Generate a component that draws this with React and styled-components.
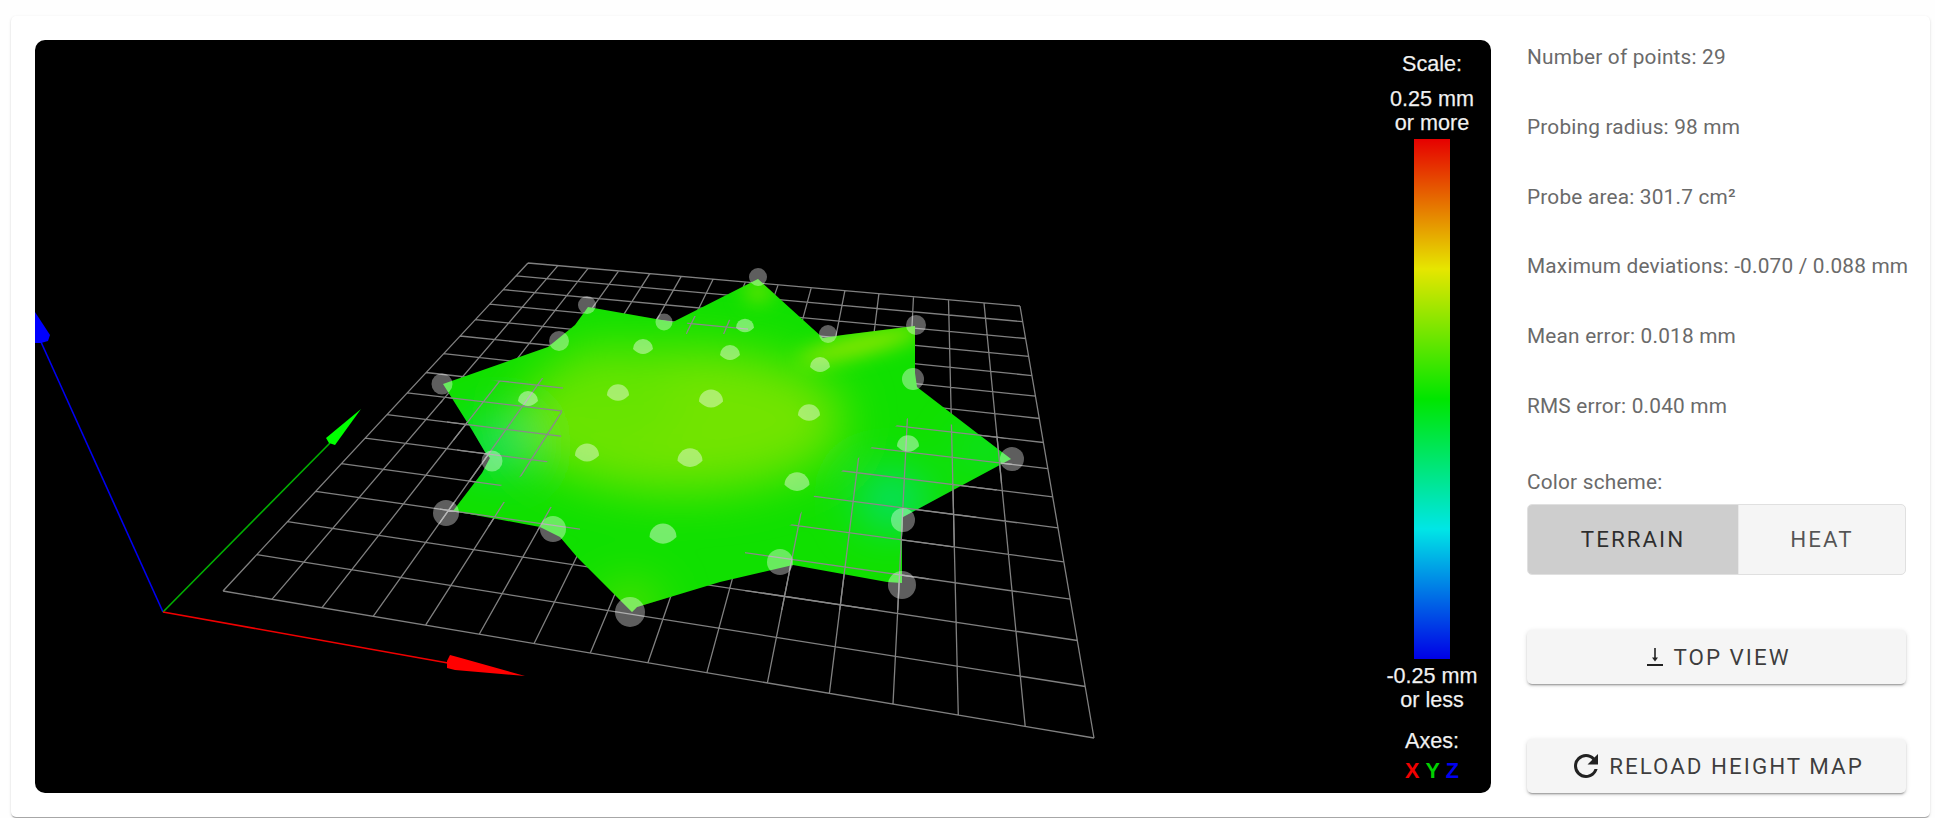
import React from "react";
import styled, { createGlobalStyle } from "styled-components";

const Global = createGlobalStyle`
  html, body { margin: 0; padding: 0; background: #fefefe; }
  body { font-family: Roboto, "Liberation Sans", sans-serif; overflow: hidden; }
`;

const Page = styled.div`
  padding: 16px 5px 1px 11px;
`;
const Card = styled.section`
  display: flex;
  gap: 36px;
  padding: 24px;
  background: #fff;
  border-radius: 5px;
  box-shadow: 0 2px 1px -1px rgba(0,0,0,.2), 0 1px 1px 0 rgba(0,0,0,.14), 0 1px 3px 0 rgba(0,0,0,.12);
`;
const Viewport = styled.div`
  position: relative;
  flex: 1;
  height: 753px;
  background: #000;
  border-radius: 10px;
  overflow: hidden;
`;
const Scene = styled.svg`
  display: block;
  width: 100%;
  height: 100%;
`;
const Legend = styled.div`
  position: absolute;
  top: 12px;
  right: 9px;
  bottom: 10px;
  width: 100px;
  display: flex;
  flex-direction: column;
  align-items: center;
  color: #f4f4f4;
  font-family: "Liberation Sans", Arial, sans-serif;
  font-size: 21.6px;
  line-height: 24px;
  text-align: center;
  -webkit-text-stroke: 0.25px #ddd;
`;
const LegendLabel = styled.div`
  margin-top: ${p => p.$top || 0}px;
  white-space: nowrap;
`;
const ScaleBar = styled.div`
  flex: 1;
  width: 36px;
  margin: 4px 0 5px;
  background: linear-gradient(to bottom, #e60000 0%, #e6e600 25%, #00e600 50%, #00e6e6 75%, #0000e6 100%);
`;
const AxisLetters = styled.div`
  display: flex;
  gap: 6px;
  margin-top: 6px;
  font-weight: 700;
  -webkit-text-stroke: 0;
`;
const AxisLetter = styled.span`
  color: ${p => p.$color};
`;
const Side = styled.aside`
  width: 379px;
  display: flex;
  flex-direction: column;
  color: #6a6a6a;
  font-size: 20.8px;
  letter-spacing: 0.2px;
`;
const InfoList = styled.div`
  display: grid;
  gap: 35.8px;
`;
const InfoRow = styled.div`
  height: 34px;
  line-height: 34px;
  white-space: nowrap;
`;
const SchemeLabel = styled(InfoRow)`
  margin-top: 42px;
`;
const Toggle = styled.div`
  display: grid;
  grid-template-columns: 211px 1fr;
  height: 71px;
  margin-top: 5px;
  box-sizing: border-box;
  border: 1px solid #e0e0e0;
  border-radius: 5px;
  background: #f5f5f5;
  overflow: hidden;
`;
const ToggleItem = styled.div`
  display: flex;
  align-items: center;
  justify-content: center;
  font-size: 22.4px;
  letter-spacing: 2px;
  color: ${p => (p.$active ? "rgba(0,0,0,.78)" : "rgba(0,0,0,.66)")};
  background: ${p => (p.$active ? "#cecece" : "transparent")};
  border-right: ${p => (p.$active ? "1px solid #e8e8e8" : "none")};
`;
const Action = styled.button`
  display: flex;
  align-items: center;
  justify-content: center;
  gap: 10px;
  height: 54px;
  margin-top: 55px;
  padding: 0 0 0 5px;
  border: 0;
  border-radius: 5px;
  background: #f5f5f5;
  color: rgba(0,0,0,.76);
  font: inherit;
  font-size: 22.4px;
  letter-spacing: 2px;
  box-shadow: 0 3px 1px -2px rgba(0,0,0,.2), 0 2px 2px 0 rgba(0,0,0,.14), 0 1px 5px 0 rgba(0,0,0,.12);
`;
const ReloadIcon = styled.svg`
  width: 36px;
  height: 36px;
  margin: 0 -5px 0 -6px;
  fill: #222;
`;
const TopIcon = styled.svg`
  width: 16px;
  height: 18px;
  fill: #222;
`;

// projective map of the unit square on to the four grid corners
const corners = [[223, 591], [1094, 738], [1020, 306], [528, 263]];
function homography([[x0, y0], [x1, y1], [x2, y2], [x3, y3]]) {
  const dx1 = x1 - x2, dx2 = x3 - x2, sx = x0 - x1 + x2 - x3;
  const dy1 = y1 - y2, dy2 = y3 - y2, sy = y0 - y1 + y2 - y3;
  const det = dx1 * dy2 - dx2 * dy1;
  const g = (sx * dy2 - dx2 * sy) / det;
  const h = (dx1 * sy - sx * dy1) / det;
  const a = x1 - x0 + g * x1, b = x3 - x0 + h * x3;
  const d = y1 - y0 + g * y1, e = y3 - y0 + h * y3;
  return (u, v) => {
    const w = g * u + h * v + 1;
    return [(a * u + b * v + x0) / w, (d * u + e * v + y0) / w];
  };
}
const project = homography(corners);
const gridPath = (() => {
  const n = 15;
  let s = "";
  for (let i = 0; i <= n; i++) {
    const t = i / n;
    const [a, b] = project(t, 0), [c, d] = project(t, 1);
    const [e, f] = project(0, t), [g, h] = project(1, t);
    s += `M${a.toFixed(1)} ${b.toFixed(1)}L${c.toFixed(1)} ${d.toFixed(1)}`;
    s += `M${e.toFixed(1)} ${f.toFixed(1)}L${g.toFixed(1)} ${h.toFixed(1)}`;
  }
  return s;
})();

const meshPoints =
  "443,384 548,347 575,325 588,307 673,322 758,279 823,338 843,335 915,326 915,373 917,387 973,430 1011,459 903,517 902,537 902,583 887,582 793,565 720,582 637,607 632,612 617,597 577,557 560,537 540,527 453,511 482,473 490,458 485,452 472,430";

const overGrid = [
  "440,402 490,381 545,378 563,385 561,440 547,462 522,476 500,486 470,486",
  "440,500 505,502 552,507 580,525 580,533 440,523",
  "688,316 697,316 748,322 748,334 686,334",
  "745,551 792,524 815,495 843,470 872,447 897,425 908,418 955,425 1012,440 1012,470 905,610 745,610",
];

const rimPoints = [
  [442, 384, 10.5], [587, 305, 9], [559, 341, 10], [664, 322, 8.5], [758, 277, 9], [828, 334, 9],
  [916, 325, 10], [913, 379, 11], [1012, 459, 12], [903, 520, 12], [902, 585, 14], [780, 562, 13],
  [630, 612, 15], [553, 529, 13], [446, 513, 13], [492, 461, 10.5],
];
const innerPoints = [
  [643, 346, 10], [730, 352, 10], [618, 392, 11], [711, 398, 12], [528, 398, 10], [745, 325, 9],
  [820, 364, 10], [809, 412, 11], [908, 443, 11], [587, 452, 12], [690, 457, 12.5], [663, 533, 13.5],
  [797, 481, 12.5],
];
const dome = ([x, y, r]) =>
  `M${x - r} ${y + r * 0.3}A${r} ${r} 0 1 1 ${x + r} ${y + r * 0.3}Q${x} ${y + r * 1.3} ${x - r} ${y + r * 0.3}Z`;

const softBlobs = [
  { cx: 680, cy: 420, rx: 165, ry: 72, fill: "#72e400" },
  { cx: 610, cy: 395, rx: 70, ry: 50, fill: "#66e400" },
  { cx: 630, cy: 605, rx: 30, ry: 18, fill: "#6ce000" },
  { cx: 497, cy: 445, rx: 30, ry: 22, fill: "#00e080" },
  { cx: 892, cy: 500, rx: 32, ry: 24, fill: "#00e090" },
  { cx: 985, cy: 450, rx: 24, ry: 10, fill: "#00e070" },
];
const tightBlobs = [
  { cx: 860, cy: 345, rx: 65, ry: 9, fill: "#a0e800", transform: "rotate(-14 860 345)" },
  { cx: 758, cy: 292, rx: 14, ry: 10, fill: "#70e400" },
];

function Scene3D() {
  return (
    <Scene viewBox="35 40 1456 753" aria-hidden="true">
      <defs>
        <clipPath id="mesh"><polygon points={meshPoints} /></clipPath>
        <clipPath id="over">
          {overGrid.map(p => <polygon key={p} points={p} />)}
        </clipPath>
        <filter id="soft" x="-100%" y="-100%" width="300%" height="300%">
          <feGaussianBlur stdDeviation="24" />
        </filter>
        <filter id="tight" x="-100%" y="-200%" width="300%" height="500%">
          <feGaussianBlur stdDeviation="10" />
        </filter>
      </defs>
      <path d={gridPath} stroke="#808080" strokeWidth="1.3" fill="none" />
      <polygon points={meshPoints} fill="#10e000" />
      <g clipPath="url(#mesh)">
        <g filter="url(#soft)">
          {softBlobs.map(b => <ellipse key={b.cx + "-" + b.cy} {...b} />)}
        </g>
        <g filter="url(#tight)">
          {tightBlobs.map(b => <ellipse key={b.cx + "-" + b.cy} {...b} />)}
        </g>
      </g>
      <path d={gridPath} stroke="#8a8a8a" strokeWidth="1.3" fill="none" clipPath="url(#over)" />
      <g fill="#fff" opacity="0.37">
        {rimPoints.map(([x, y, r]) => <circle key={x} cx={x} cy={y} r={r} />)}
      </g>
      <g fill="#fff" opacity="0.42">
        {innerPoints.map(p => <path key={p[0]} d={dome(p)} />)}
      </g>
      <g strokeWidth="1.6" fill="none">
        <line x1="163" y1="612" x2="41" y2="342" stroke="#0000f0" />
        <line x1="163" y1="612" x2="330" y2="443" stroke="#00b000" />
        <line x1="163" y1="612" x2="448" y2="663" stroke="#f00000" />
      </g>
      <polygon points="35,312 50,335 48,341 41,343 35,343" fill="#0000ff" />
      <polygon points="361,409 326,438 329,443 335,445" fill="#00ff00" />
      <polygon points="525,676 461,658 450,655 447,661 447,668 455,670" fill="#ff0000" />
    </Scene>
  );
}

export default function App() {
  return (
    <Page>
      <Global />
      <Card>
        <Viewport>
          <Scene3D />
          <Legend>
            <LegendLabel>Scale:</LegendLabel>
            <LegendLabel $top={11}>0.25 mm</LegendLabel>
            <LegendLabel>or more</LegendLabel>
            <ScaleBar />
            <LegendLabel>-0.25 mm</LegendLabel>
            <LegendLabel>or less</LegendLabel>
            <LegendLabel $top={17}>Axes:</LegendLabel>
            <AxisLetters>
              <AxisLetter $color="#f00000">X</AxisLetter>
              <AxisLetter $color="#00d000">Y</AxisLetter>
              <AxisLetter $color="#0000f0">Z</AxisLetter>
            </AxisLetters>
          </Legend>
        </Viewport>
        <Side>
          <InfoList>
            <InfoRow>Number of points: 29</InfoRow>
            <InfoRow>Probing radius: 98 mm</InfoRow>
            <InfoRow>Probe area: 301.7 cm²</InfoRow>
            <InfoRow>Maximum deviations: -0.070 / 0.088 mm</InfoRow>
            <InfoRow>Mean error: 0.018 mm</InfoRow>
            <InfoRow>RMS error: 0.040 mm</InfoRow>
          </InfoList>
          <SchemeLabel>Color scheme:</SchemeLabel>
          <Toggle>
            <ToggleItem $active>TERRAIN</ToggleItem>
            <ToggleItem>HEAT</ToggleItem>
          </Toggle>
          <Action>
            <TopIcon viewBox="0 0 16 18">
              <path d="M7.2 0h1.6v9.5H11L8 13.5 5 9.5h2.2zM0 16h16v2H0z" />
            </TopIcon>
            TOP VIEW
          </Action>
          <Action>
            <ReloadIcon viewBox="0 0 24 24">
              <path d="M17.65 6.35C16.2 4.9 14.21 4 12 4A8 8 0 0 0 4 12A8 8 0 0 0 12 20C15.73 20 18.84 17.45 19.73 14H17.65C16.83 16.33 14.61 18 12 18A6 6 0 0 1 6 12A6 6 0 0 1 12 6C13.66 6 15.14 6.69 16.22 7.78L13 11H20V4L17.65 6.35Z" />
            </ReloadIcon>
            RELOAD HEIGHT MAP
          </Action>
        </Side>
      </Card>
    </Page>
  );
}
